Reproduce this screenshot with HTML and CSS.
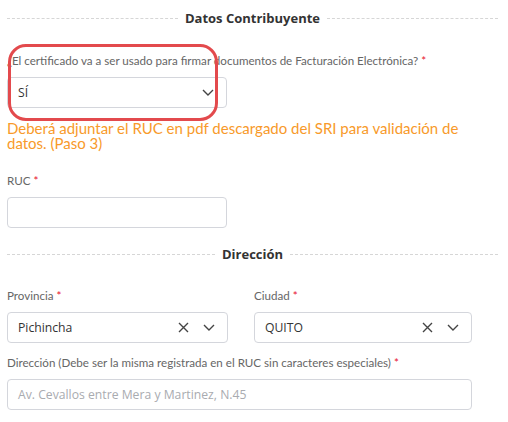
FILE: index.html
```html
<!DOCTYPE html>
<html lang="es">
<head>
    <meta charset="UTF-8">
    <meta name="viewport" content="width=device-width, initial-scale=1.0">
    <title>Datos Contribuyente</title>
    <link rel="stylesheet" href="styles.css">
</head>
<body>
    <div class="form">
        <div class="section-title"><span>Datos Contribuyente</span></div>

        <div class="field field-cert">
            <label class="label">¿El certificado va a ser usado para firmar documentos de Facturación Electrónica? <b>*</b></label>
            <div class="select half">
                <span class="value">SÍ</span>
                <svg class="chev" width="12" height="7" viewBox="0 0 12 7"><path d="M1 1l5 5 5-5" fill="none" stroke="#444" stroke-width="1.4"/></svg>
            </div>
            <div class="highlight"></div>
        </div>

        <p class="notice">Deberá adjuntar el RUC en pdf descargado del SRI para validación de datos. (Paso 3)</p>

        <div class="field field-ruc">
            <label class="label">RUC <b>*</b></label>
            <div class="input half"></div>
        </div>

        <div class="section-title second"><span>Dirección</span></div>

        <div class="row">
            <div class="field">
                <label class="label">Provincia <b>*</b></label>
                <div class="select">
                    <span class="value">Pichincha</span>
                    <svg class="clear" width="11" height="11" viewBox="0 0 11 11"><path d="M1 1l9 9M10 1l-9 9" fill="none" stroke="#444" stroke-width="1.4"/></svg>
                    <svg class="chev" width="12" height="7" viewBox="0 0 12 7"><path d="M1 1l5 5 5-5" fill="none" stroke="#444" stroke-width="1.4"/></svg>
                </div>
            </div>
            <div class="field">
                <label class="label">Ciudad <b>*</b></label>
                <div class="select">
                    <span class="value">QUITO</span>
                    <svg class="clear" width="11" height="11" viewBox="0 0 11 11"><path d="M1 1l9 9M10 1l-9 9" fill="none" stroke="#444" stroke-width="1.4"/></svg>
                    <svg class="chev" width="12" height="7" viewBox="0 0 12 7"><path d="M1 1l5 5 5-5" fill="none" stroke="#444" stroke-width="1.4"/></svg>
                </div>
            </div>
        </div>

        <div class="field address">
            <label class="label">Dirección (Debe ser la misma registrada en el RUC sin caracteres especiales) <b>*</b></label>
            <div class="input"><span class="placeholder">Av. Cevallos entre Mera y Martinez, N.45</span></div>
        </div>
    </div>
</body>
</html>
```

FILE: styles.css
```css
body {
    margin: 0;
    background: #fff;
    font-family: "Open Sans", sans-serif;
    color: #333;
}
.form {
    width: 491px;
    margin-left: 7px;
    padding-top: 8px;
}
.section-title {
    display: flex;
    align-items: center;
    gap: 7px;
    font-weight: bold;
    font-size: 13px;
    line-height: 20px;
    color: #333;
}
.section-title::before,
.section-title::after {
    content: "";
    flex: 1;
    border-top: 1px dashed #d6d6d6;
}
.section-title.second { margin-top: 16px; }
.field {
    position: relative;
    padding-right: 26px;
}
.field-cert { margin-top: 25px; }
.field-ruc { margin-top: 22px; }
.label {
    display: block;
    font-family: "Lato", sans-serif;
    font-size: 11.6px;
    line-height: 16px;
    color: #666;
    margin-bottom: 8px;
}
.label b {
    color: #e8112d;
    font-weight: normal;
}
.half { width: 220px; }
.select,
.input {
    box-sizing: border-box;
    height: 31px;
    border: 1px solid #d4d6dc;
    border-radius: 4px;
    display: flex;
    align-items: center;
    padding: 0 12px 0 10px;
    font-size: 12.2px;
    color: #333;
}
.select .value { flex: 1; }
.select .clear { margin-right: 14px; }
.highlight {
    position: absolute;
    left: 1px;
    top: -9px;
    width: 210px;
    height: 77px;
    box-sizing: border-box;
    border: 3px solid #e34a4d;
    border-radius: 18px;
}
.notice {
    margin: 13px 0 0;
    font-family: "Lato", sans-serif;
    font-size: 15px;
    line-height: 15px;
    color: #f89a2a;
    width: 470px;
}
.row {
    display: grid;
    grid-template-columns: 247px 1fr;
    margin-top: 24px;
}
.address { margin-top: 12px; }
.placeholder { color: #a9abb0; }
```
